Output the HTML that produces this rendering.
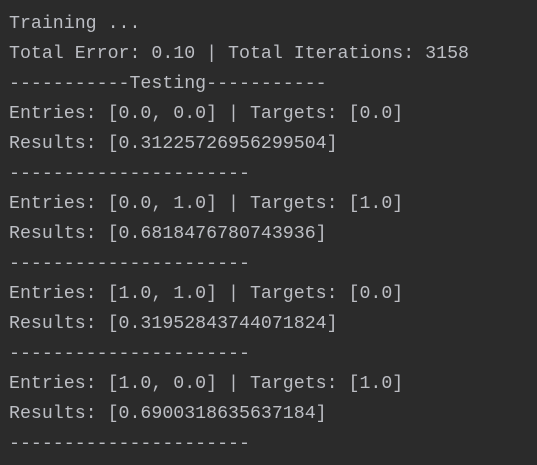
<html><head><style>
body{margin:0;background:#2b2b2b;width:537px;height:465px;overflow:hidden}
pre{margin:0;padding:9px 0 0 9px;font-family:"Liberation Mono",monospace;font-size:18.25px;line-height:30px;color:#bcbec4}
</style></head><body><pre>Training ...
Total Error: 0.10 | Total Iterations: 3158
-----------Testing-----------
Entries: [0.0, 0.0] | Targets: [0.0]
Results: [0.31225726956299504]
----------------------
Entries: [0.0, 1.0] | Targets: [1.0]
Results: [0.6818476780743936]
----------------------
Entries: [1.0, 1.0] | Targets: [0.0]
Results: [0.31952843744071824]
----------------------
Entries: [1.0, 0.0] | Targets: [1.0]
Results: [0.6900318635637184]
----------------------</pre></body></html>
